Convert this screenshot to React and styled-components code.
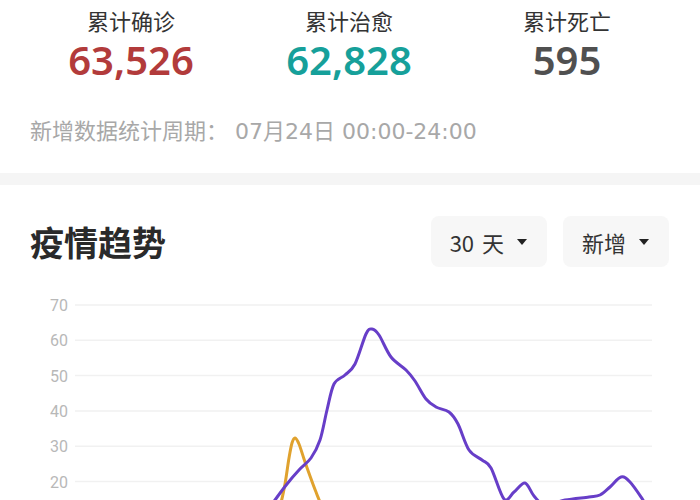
import React from "react";
import styled, { createGlobalStyle } from "styled-components";

const GlobalStyle = createGlobalStyle`
  html, body {
    margin: 0;
    padding: 0;
    overflow: hidden;
    background: #fff;
  }
  body {
    font-family: "Noto Sans CJK SC", "Noto Sans", sans-serif;
    color: #333;
  }
`;

const stats = [
  { label: "累计确诊", value: "63,526", color: "#b23b3b" },
  { label: "累计治愈", value: "62,828", color: "#16a09a" },
  { label: "累计死亡", value: "595", color: "#505050" },
];

// page coordinates sampled from the curve, chart svg starts at y=290
const purple = [
  [200, 548], [240, 540], [262, 519], [275, 500], [287, 484], [299, 470],
  [311, 458], [320, 440], [327, 410], [334, 384], [345, 375], [355, 364],
  [366, 334], [372, 329], [379, 335], [391, 357], [406, 370], [415, 381],
  [426, 399], [436, 407], [449, 412], [458, 424], [469, 450], [482, 460],
  [491, 468], [504, 499], [514, 492], [525, 483], [534, 496], [545, 505],
  [565, 500], [589, 497], [600, 495], [610, 487], [621, 477], [630, 482],
  [643, 500], [652, 515],
];

const orange = [
  [240, 545], [270, 532], [280, 506], [285, 484], [289, 458], [292, 443],
  [295, 438], [299, 444], [304, 459], [310, 476], [316, 492], [322, 505],
  [340, 525],
];

const TOP = 290;

function smooth(pts) {
  const p = pts.map(([x, y]) => [x, y - TOP]);
  let d = `M${p[0][0]},${p[0][1]}`;
  for (let i = 0; i < p.length - 1; i++) {
    const p0 = p[i - 1] || p[i];
    const p1 = p[i];
    const p2 = p[i + 1];
    const p3 = p[i + 2] || p2;
    const c1x = p1[0] + (p2[0] - p0[0]) / 6;
    const c1y = p1[1] + (p2[1] - p0[1]) / 6;
    const c2x = p2[0] - (p3[0] - p1[0]) / 6;
    const c2y = p2[1] - (p3[1] - p1[1]) / 6;
    d += ` C${c1x.toFixed(1)},${c1y.toFixed(1)} ${c2x.toFixed(1)},${c2y.toFixed(1)} ${p2[0]},${p2[1]}`;
  }
  return d;
}

const ticks = [70, 60, 50, 40, 30, 20, 10, 0];

function App() {
  return (
    <Page>
      <GlobalStyle />
      <Stats>
        {stats.map((s) => (
          <Stat key={s.label}>
            <StatLabel>{s.label}</StatLabel>
            <StatValue color={s.color}>{s.value}</StatValue>
          </Stat>
        ))}
      </Stats>
      <Period>新增数据统计周期： 07月24日 00:00-24:00</Period>
      <Divider />
      <Trend>
        <TrendHeader>
          <Title>疫情趋势</Title>
          <Filters>
            <Filter>
              30 天 <Caret />
            </Filter>
            <Filter>
              新增 <Caret />
            </Filter>
          </Filters>
        </TrendHeader>
        <Chart viewBox="0 0 700 270" width="700" height="270">
          {ticks.map((t) => {
            const y = 15 + (70 - t) * 3.53;
            return (
              <g key={t}>
                <line x1="75" x2="652" y1={y} y2={y} stroke="#f1f1f1" strokeWidth="1.5" />
                <text
                  x="68"
                  y={y + 6}
                  textAnchor="end"
                  fontSize="16"
                  fill="#b8b8b8"
                  fontFamily="Roboto, 'Noto Sans', sans-serif"
                >
                  {t}
                </text>
              </g>
            );
          })}
          <path d={smooth(orange)} fill="none" stroke="#e0a22e" strokeWidth="3" strokeLinecap="round" />
          <path d={smooth(purple)} fill="none" stroke="#673ec8" strokeWidth="3" strokeLinecap="round" />
        </Chart>
      </Trend>
    </Page>
  );
}

const Page = styled.div`
  width: 700px;
  background: #fff;
`;

const Stats = styled.div`
  display: grid;
  grid-template-columns: repeat(3, 1fr);
  padding: 5px 24px 0 22px;
`;

const Stat = styled.div`
  display: flex;
  flex-direction: column;
  align-items: center;
`;

const StatLabel = styled.div`
  font-size: 22px;
  line-height: 30px;
  color: #333;
`;

const StatValue = styled.div`
  margin-top: 4px;
  font-family: "Noto Sans", sans-serif;
  font-size: 40px;
  line-height: 42px;
  font-weight: 600;
  color: ${(p) => p.color};
`;

const Period = styled.div`
  margin-top: 36px;
  padding: 0 30px 26px;
  font-family: "DejaVu Sans", "Noto Sans CJK SC", sans-serif;
  font-size: 22px;
  line-height: 30px;
  color: #a8a8a8;
`;

const Divider = styled.div`
  height: 12px;
  background: #f5f5f5;
`;

const Trend = styled.section`
  padding-top: 31px;
`;

const TrendHeader = styled.div`
  display: flex;
  align-items: center;
  justify-content: space-between;
  padding: 0 31px 0 30px;
`;

const Title = styled.h2`
  margin: 0;
  font-size: 34px;
  line-height: 40px;
  font-weight: 700;
  color: #2a2a2a;
`;

const Filters = styled.div`
  display: flex;
  gap: 16px;
`;

const Filter = styled.div`
  display: flex;
  align-items: center;
  gap: 13px;
  height: 51px;
  padding: 0 20px 0 19px;
  border-radius: 8px;
  background: #f7f7f7;
  font-size: 22px;
  word-spacing: 3px;
  color: #333;
`;

const Caret = styled.span`
  width: 0;
  height: 0;
  border-left: 5px solid transparent;
  border-right: 5px solid transparent;
  border-top: 6px solid #222;
`;

const Chart = styled.svg`
  display: block;
  margin-top: 23px;
`;

export default App;
